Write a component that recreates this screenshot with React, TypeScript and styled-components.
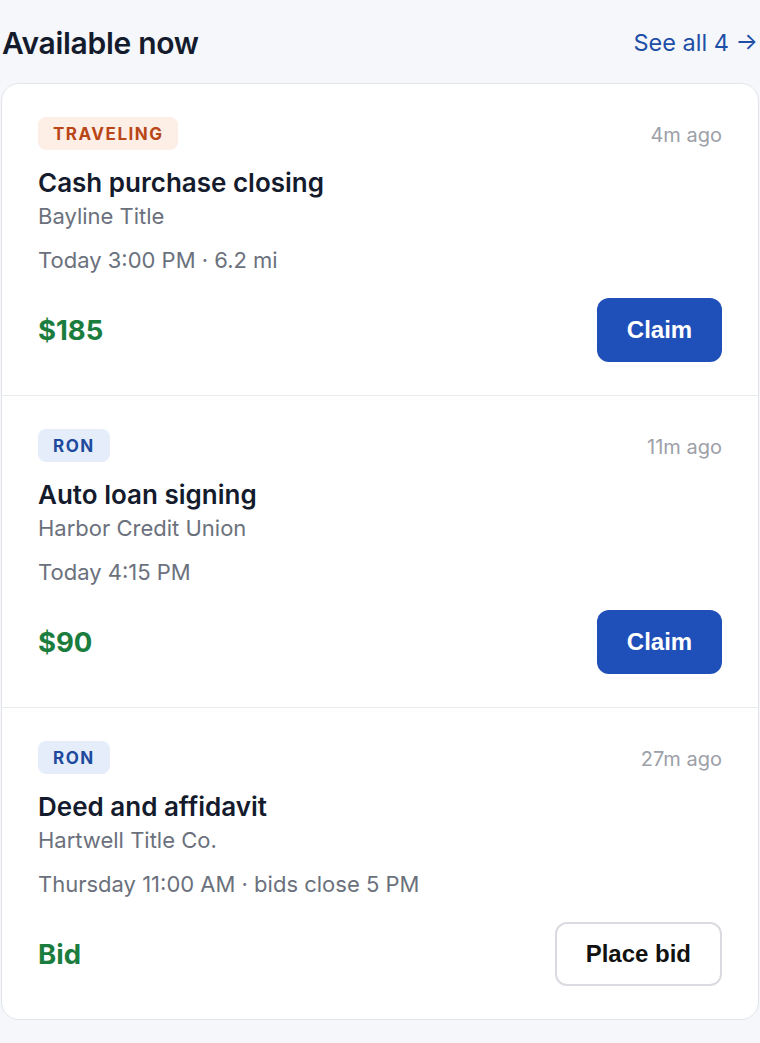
import React, { FC } from 'react';
import styled, { createGlobalStyle } from 'styled-components';

const GlobalStyle = createGlobalStyle`
  html, body {
    margin: 0;
    padding: 0;
    background: #f5f7fb;
    font-family: Inter, "Noto Sans", sans-serif;
    color: #111827;
  }
`;

type Tone = 'orange' | 'blue';

interface Job {
  tag: string;
  tone: Tone;
  ago: string;
  title: string;
  company: string;
  when: string;
  price: string;
  action: string;
  primary: boolean;
}

const jobs: Job[] = [
  {
    tag: 'TRAVELING',
    tone: 'orange',
    ago: '4m ago',
    title: 'Cash purchase closing',
    company: 'Bayline Title',
    when: 'Today 3:00 PM · 6.2 mi',
    price: '$185',
    action: 'Claim',
    primary: true,
  },
  {
    tag: 'RON',
    tone: 'blue',
    ago: '11m ago',
    title: 'Auto loan signing',
    company: 'Harbor Credit Union',
    when: 'Today 4:15 PM',
    price: '$90',
    action: 'Claim',
    primary: true,
  },
  {
    tag: 'RON',
    tone: 'blue',
    ago: '27m ago',
    title: 'Deed and affidavit',
    company: 'Hartwell Title Co.',
    when: 'Thursday 11:00 AM · bids close 5 PM',
    price: 'Bid',
    action: 'Place bid',
    primary: false,
  },
];

const Page = styled.div`
  padding: 26px 1px 24px 1px;
`;

const Header = styled.div`
  display: flex;
  justify-content: space-between;
  align-items: center;
  height: 34px;
  margin-bottom: 23px;
`;

const Heading = styled.h2`
  margin: 0 0 0 1px;
  font-size: 30px;
  line-height: 34px;
  font-weight: 600;
  letter-spacing: -0.3px;
  color: #141b2d;
`;

const SeeAll = styled.a`
  font-size: 23.5px;
  line-height: 34px;
  color: #1e4ea6;
  text-decoration: none;
  margin-right: 1px;
`;

const Card = styled.div`
  background: #ffffff;
  border: 1px solid #e1e4ea;
  border-radius: 18px;
  overflow: hidden;
`;

const Item = styled.div`
  display: flex;
  flex-direction: column;
  padding: 33px 36px 33px 36px;
  border-bottom: 1px solid #e9ebef;

  &:last-child {
    border-bottom: none;
  }
`;

const TopRow = styled.div`
  display: flex;
  justify-content: space-between;
  align-items: center;
`;

const Badge = styled.span<{ $tone: Tone }>`
  display: inline-flex;
  align-items: center;
  height: 33px;
  padding: 0 15px;
  border-radius: 8px;
  font-size: 17px;
  font-weight: 700;
  letter-spacing: 1.5px;
  background: ${(p) => (p.$tone === 'orange' ? '#fdeee6' : '#e5edfb')};
  color: ${(p) => (p.$tone === 'orange' ? '#b94617' : '#1d4a9e')};
`;

const Ago = styled.span`
  font-size: 20px;
  line-height: 26px;
  margin-top: 3px;
  color: #9ca0a8;
`;

const Title = styled.div`
  margin-top: 18px;
  font-size: 26px;
  line-height: 30px;
  font-weight: 600;
  color: #141b2d;
`;

const Company = styled.div`
  margin-top: 5px;
  font-size: 22px;
  line-height: 26px;
  color: #6b717c;
`;

const When = styled.div`
  margin-top: 18px;
  font-size: 22px;
  line-height: 26px;
  color: #6b717c;
`;

const BottomRow = styled.div`
  display: flex;
  justify-content: space-between;
  align-items: center;
  margin-top: 25px;
`;

const Price = styled.span`
  font-size: 27.5px;
  font-weight: 700;
  color: #1a7d3e;
`;

const ActionButton = styled.button<{ $primary: boolean }>`
  height: 64px;
  padding: 0 29px;
  min-width: 125px;
  border-radius: 12px;
  font-family: "Liberation Sans", Arial, sans-serif;
  font-size: 24px;
  font-weight: 700;
  cursor: pointer;
  background: ${(p) => (p.$primary ? '#1f4fb9' : '#ffffff')};
  color: ${(p) => (p.$primary ? '#ffffff' : '#111111')};
  border: ${(p) => (p.$primary ? 'none' : '2px solid #d9dbe0')};
`;

const JobRow: FC<{ job: Job }> = ({ job }) => (
  <Item>
    <TopRow>
      <Badge $tone={job.tone}>{job.tag}</Badge>
      <Ago>{job.ago}</Ago>
    </TopRow>
    <Title>{job.title}</Title>
    <Company>{job.company}</Company>
    <When>{job.when}</When>
    <BottomRow>
      <Price>{job.price}</Price>
      <ActionButton $primary={job.primary}>{job.action}</ActionButton>
    </BottomRow>
  </Item>
);

const App: FC = () => (
  <>
    <GlobalStyle />
    <Page>
      <Header>
        <Heading>Available now</Heading>
        <SeeAll href="#">See all 4 →</SeeAll>
      </Header>
      <Card>
        {jobs.map((job) => (
          <JobRow key={job.title} job={job} />
        ))}
      </Card>
    </Page>
  </>
);

export default App;
